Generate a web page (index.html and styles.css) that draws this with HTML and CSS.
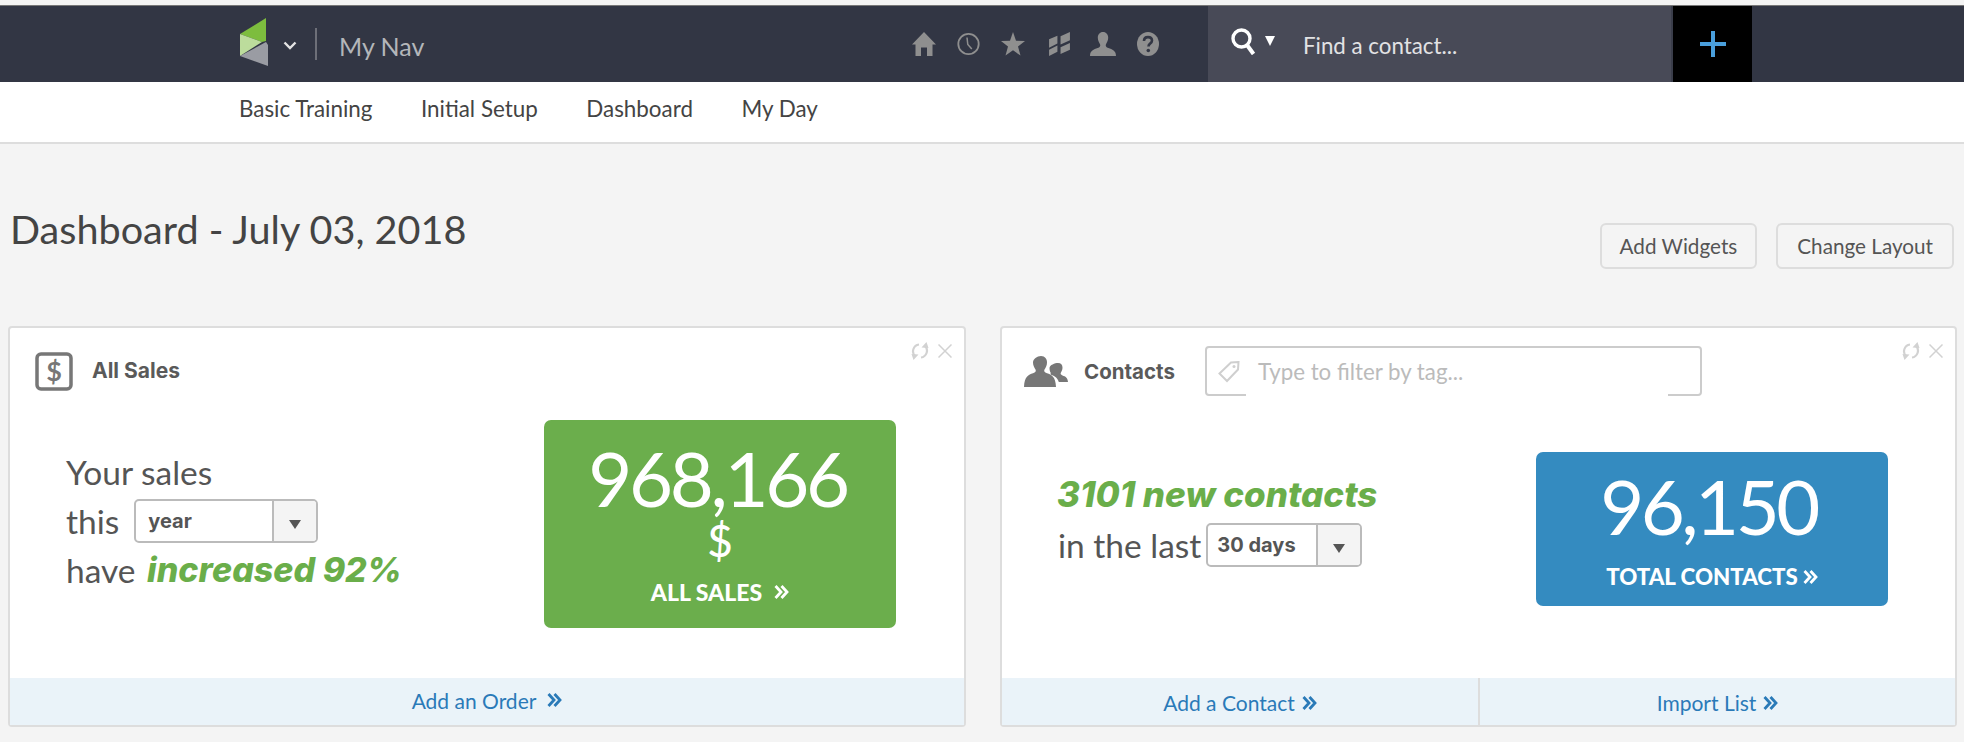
FILE: index.html
```html
<!DOCTYPE html>
<html lang="en">
<head>
<meta charset="utf-8">
<title>Dashboard</title>
<link rel="stylesheet" href="styles.css">
</head>
<body>
<header class="topbar">
  <div class="brand">
    <svg class="logo" width="28" height="48" viewBox="0 0 28 48"><polygon points="0,16 26,0 26,23 22,24" fill="#7dbd3e"/><polygon points="0,16 22,24 0,38" fill="#bcdc9c"/><polygon points="0,38 26,24 28,27 28,48" fill="#9a9ca3"/></svg>
    <svg class="chev" width="14" height="9" viewBox="0 0 14 9"><path d="M1.500 1.500L7 7l5.500-5.500" fill="none" stroke="#e4e4e4" stroke-width="2.400"/></svg>
    <span class="divider"></span>
    <span class="mynav">My Nav</span>
  </div>
  <div class="quick">
    <svg width="24" height="24" viewBox="0 0 24 24"><path d="M12 0L24 12.500h-3.500V24h-5.500V15.500H9V24H3.500V12.500H0z" fill="#8f8f8f"/></svg>
    <svg width="23" height="24" viewBox="0 0 23 24"><circle cx="11.500" cy="12" r="10.200" fill="none" stroke="#8f8f8f" stroke-width="1.800"/><path d="M10 5.500l.8 7 4 4.500" fill="none" stroke="#8f8f8f" stroke-width="1.500"/></svg>
    <svg width="24" height="24" viewBox="0 0 24 24"><polygon points="12,0 15,8.700 24,9 17,14.500 19.500,23.500 12,18.300 4.500,23.500 7,14.500 0,9 9,8.700" fill="#8f8f8f"/></svg>
    <svg class="q-flags" width="21" height="24" viewBox="0 0 20 23"><path d="M0 7L8 3.500V11L0 15zM0 17L8 13V19L0 23zM11 4L20 0V8L11 12zM11 14.500L20 10.500V17L11 21z" fill="#8f8f8f"/></svg>
    <svg class="q-person" width="26" height="24" viewBox="0 0 26 24"><path d="M13 0c3.200 0 5.200 2.500 5.200 5.800 0 3-1.500 5-2.300 6.700-.6 1.400.2 2.800 2.500 3.600 3.800 1.300 7.600 2.600 7.600 7.900H0c0-5.300 3.800-6.600 7.600-7.900 2.300-.8 3.100-2.200 2.500-3.600-.8-1.700-2.300-3.700-2.300-6.700C7.800 2.500 9.800 0 13 0z" fill="#8f8f8f"/></svg>
    <svg width="22" height="24" viewBox="0 0 22 24"><ellipse cx="11" cy="12" rx="11" ry="12" fill="#8f8f8f"/><path d="M7 9c0-2.600 1.800-3.900 4-3.900s4 1.300 4 3.500c0 3-3.500 3-3.500 5.800" fill="none" stroke="#323644" stroke-width="2.600"/><circle cx="11.300" cy="18.500" r="1.800" fill="#323644"/></svg>
  </div>
  <div class="search">
    <svg class="search-icon" width="28" height="27" viewBox="0 0 28 27"><circle cx="10.500" cy="10.500" r="8.500" fill="none" stroke="#fff" stroke-width="3.400"/><path d="M16 17l6.500 9" stroke="#fff" stroke-width="4" fill="none"/></svg>
    <span class="search-caret"></span>
    <span class="search-text">Find a contact...</span>
  </div>
  <div class="add">
    <svg width="26" height="26" viewBox="0 0 26 26"><path d="M13 0v26M0 13h26" stroke="#4a9fdc" stroke-width="4" fill="none"/></svg>
  </div>
</header>
<nav class="subnav">
  <a>Basic Training</a>
  <a>Initial Setup</a>
  <a>Dashboard</a>
  <a>My Day</a>
</nav>
<main class="page">
  <div class="titlebar">
    <h1>Dashboard - July 03, 2018</h1>
    <div class="actions">
      <button class="btn">Add Widgets</button>
      <button class="btn">Change Layout</button>
    </div>
  </div>
  <div class="cards">
    <section class="card card-sales">
      <div class="tools">
        <svg width="18" height="18" viewBox="0 0 18 18"><path d="M8 2.500A6.800 6.800 0 0 0 4 14M10 15.500A6.800 6.800 0 0 0 14 4" fill="none" stroke="#d2d2d2" stroke-width="2.200"/><path d="M.5 12l7 .5-5 5.500zM17.500 6l-7-.5 5-5.500z" fill="#d2d2d2"/></svg>
        <svg width="14" height="14" viewBox="0 0 14 14"><path d="M.5.500l13 13M13.500.500l-13 13" stroke="#d2d2d2" stroke-width="1.500"/></svg>
      </div>
      <div class="card-head head-sales">
        <svg width="38" height="39" viewBox="0 0 38 39"><rect x="2" y="2" width="34" height="35" rx="4" fill="none" stroke="#777" stroke-width="3.500"/><text x="19" y="29" text-anchor="middle" class="dollar-glyph">$</text></svg>
        <span class="card-title">All Sales</span>
      </div>
      <div class="card-body">
        <div class="lines lines-sales">
          <div class="line">Your sales</div>
          <div class="line">this<span class="select select-year"><span class="select-val">year</span><span class="select-arrow"></span></span></div>
          <div class="line">have <em class="hl hl-inc">increased 92%</em></div>
        </div>
        <a class="stat stat-green">
          <span class="stat-num">968,166</span>
          <span class="stat-unit">$</span>
          <span class="stat-label label-sales">ALL SALES
            <svg class="chevs" width="15" height="14" viewBox="0 0 15 14"><path d="M1.500 1l5.500 6-5.500 6M7.500 1l5.500 6-5.500 6" fill="none" stroke="#fff" stroke-width="2.800"/></svg>
          </span>
        </a>
      </div>
      <div class="card-foot foot-sales">
        <a class="foot-link link-order">Add an Order
          <svg class="chevs" width="15" height="14" viewBox="0 0 15 14"><path d="M1.500 1l5.500 6-5.500 6M7.500 1l5.500 6-5.500 6" fill="none" stroke="#2a7ab8" stroke-width="2.800"/></svg>
        </a>
      </div>
    </section>
    <section class="card card-contacts">
      <div class="tools">
        <svg width="18" height="18" viewBox="0 0 18 18"><path d="M8 2.500A6.800 6.800 0 0 0 4 14M10 15.500A6.800 6.800 0 0 0 14 4" fill="none" stroke="#d2d2d2" stroke-width="2.200"/><path d="M.5 12l7 .5-5 5.500zM17.500 6l-7-.5 5-5.500z" fill="#d2d2d2"/></svg>
        <svg width="14" height="14" viewBox="0 0 14 14"><path d="M.5.500l13 13M13.500.500l-13 13" stroke="#d2d2d2" stroke-width="1.500"/></svg>
      </div>
      <div class="card-head head-contacts">
        <svg width="44" height="31" viewBox="0 0 44 31"><path d="M17 0c4 0 6 3 6 6.500 0 3-1.500 5.500-2.500 7-.8 1.500 0 3 2.500 3.800 4.500 1.500 8.500 3 9 13.700H0c.5-10.700 4.500-12.200 9-13.700 2.500-.8 3.300-2.300 2.500-3.800-1-1.500-2.500-4-2.500-7C9 3 13 0 17 0z" fill="#777"/><path d="M34 7c3 0 4.500 2 4.500 4.800 0 2-1 3.800-1.700 5-.5 1 0 2 1.700 2.600 2.900 1 5.200 2 5.500 6.600H34.800c-1-3.500-3-5.400-7.300-7-1.300-.5-1-1.300-.7-2-.8-1.400-1.300-3-1.300-5C25.500 9 31 7 34 7z" fill="#777"/></svg>
        <span class="card-title">Contacts</span>
        <div class="tagfilter">
          <svg width="22" height="22" viewBox="0 0 22 22"><path d="M13 1.500l7.500-.5-.5 7.500L9 20 1.500 12.500z" fill="none" stroke="#cfcfcf" stroke-width="2"/><circle cx="16" cy="5.500" r="1.500" fill="#cfcfcf"/></svg>
          <span class="placeholder">Type to filter by tag...</span>
        </div>
      </div>
      <div class="card-body">
        <div class="lines lines-contacts">
          <div class="line"><em class="hl hl-new">3101 new contacts</em></div>
          <div class="line">in the last<span class="select select-days"><span class="select-val">30 days</span><span class="select-arrow"></span></span></div>
        </div>
        <a class="stat stat-blue">
          <span class="stat-num num-contacts">96,150</span>
          <span class="stat-label label-contacts">TOTAL CONTACTS
            <svg class="chevs" width="15" height="14" viewBox="0 0 15 14"><path d="M1.500 1l5.500 6-5.500 6M7.500 1l5.500 6-5.500 6" fill="none" stroke="#fff" stroke-width="2.800"/></svg>
          </span>
        </a>
      </div>
      <div class="card-foot foot-contacts">
        <a class="foot-link">Add a Contact
          <svg class="chevs" width="15" height="14" viewBox="0 0 15 14"><path d="M1.500 1l5.500 6-5.500 6M7.500 1l5.500 6-5.500 6" fill="none" stroke="#2a7ab8" stroke-width="2.800"/></svg>
        </a>
        <a class="foot-link">Import List
          <svg class="chevs" width="15" height="14" viewBox="0 0 15 14"><path d="M1.500 1l5.500 6-5.500 6M7.500 1l5.500 6-5.500 6" fill="none" stroke="#2a7ab8" stroke-width="2.800"/></svg>
        </a>
      </div>
    </section>
  </div>
</main>
</body>
</html>
```
FILE: styles.css
```css
* { box-sizing: border-box; }
html, body { margin: 0; padding: 0; }
body {
  background: #f4f4f4;
  font-family: "Lato", "Liberation Sans", sans-serif;
  color: #555;
  height: 742px;
  overflow: hidden;
  padding-top: 5px;
}
.topbar {
  height: 77px;
  background: #323644;
  border-top: 1px solid #777;
  display: flex;
  align-items: stretch;
}
.brand {
  display: flex;
  align-items: center;
  padding-left: 240px;
  width: 880px;
}
.logo { margin-top: -4px; }
.chev { margin-left: 15px; margin-top: 2px; }
.divider { width: 2px; height: 32px; background: #6d6f78; margin-left: 18px; }
.mynav { margin-left: 22px; font-size: 25px; color: #b4b6ba; margin-top: 4px; }
.quick {
  display: flex;
  align-items: center;
  width: 328px;
  padding-left: 32px;
  gap: 21px;
}
.q-flags { margin-left: 3px; }
.q-person { margin-left: -1px; }
.search {
  width: 465px;
  background: #484a57;
  display: flex;
  align-items: center;
  padding-left: 23px;
  border-right: 2px solid #3a3d4a;
}
.search-icon { margin-top: -5px; }
.search-caret {
  width: 0;
  height: 0;
  border-left: 5.500px solid transparent;
  border-right: 5.500px solid transparent;
  border-top: 10px solid #fff;
  margin-left: 6px;
  margin-top: -7px;
}
.search-text { margin-left: 28px; font-size: 22.300px; color: #e2e2e4; margin-top: 3px; }
.add {
  width: 79px;
  background: #000;
  display: flex;
  align-items: center;
  justify-content: center;
}
.subnav {
  height: 62px;
  background: #fff;
  border-bottom: 2px solid #ddd;
  display: flex;
  align-items: center;
  padding: 0 0 8px 239px;
  gap: 48.500px;
  font-size: 22.400px;
  color: #444;
}
.page { padding: 0 7px 0 8px; }
.titlebar {
  display: flex;
  justify-content: space-between;
  padding: 0 3px 0 2px;
  height: 182px;
}
h1 {
  margin: 62px 0 0;
  font-size: 39.600px;
  font-weight: 400;
  color: #444;
  line-height: 46px;
}
.actions { display: flex; gap: 19px; padding-top: 79px; align-items: flex-start; }
.btn {
  height: 46px;
  padding: 0 18px;
  border: 2px solid #ddd;
  border-radius: 6px;
  background: #f4f4f4;
  font: 400 20.700px "Lato", "Liberation Sans", sans-serif;
  color: #555;
}
.btn:last-child { padding: 0 19px; }
.cards { display: flex; gap: 34px; }
.card {
  position: relative;
  height: 401px;
  background: #fff;
  border: 2px solid #ddd;
  border-radius: 4px;
  display: flex;
  flex-direction: column;
}
.card-sales { width: 958px; }
.card-contacts { width: 957px; }
.tools {
  position: absolute;
  top: 14px;
  right: 12px;
  display: flex;
  align-items: center;
  gap: 9px;
}
.card-head { display: flex; align-items: flex-start; flex: none; }
.head-sales { height: 92px; padding: 24px 0 0 25px; }
.head-contacts { height: 124px; padding: 28px 0 0 22px; }
.card-title { font: 700 21px/24px "Inter", "Liberation Sans", sans-serif; color: #5a5a5a; }
.head-sales .card-title { margin: 7px 0 0 19px; }
.head-contacts .card-title { margin: 4px 0 0 16px; font-size: 20.500px; }
.dollar-glyph { font: 700 27px "Lato", "Liberation Sans", sans-serif; fill: #777; }
.tagfilter {
  position: relative;
  margin: -10px 0 0 30px;
  width: 497px;
  height: 50px;
  border: 2px solid #ccc;
  border-radius: 4px;
  display: flex;
  align-items: center;
  padding: 1px 0 0 11px;
}
.tagfilter::after {
  content: "";
  position: absolute;
  left: 39px;
  right: 32px;
  bottom: -2px;
  height: 2px;
  background: #fff;
}
.placeholder { margin-left: 18px; font-size: 22.300px; color: #bbb; }
.card-body {
  flex: 1;
  display: flex;
  justify-content: space-between;
  align-items: flex-start;
}
.card-sales .card-body { padding: 0 68px 0 56px; }
.card-contacts .card-body { padding: 0 67px 0 56px; }
.lines { font-size: 33.500px; color: #555; }
.lines-sales { margin-top: 27px; }
.lines-contacts { margin-top: 16px; }
.line { display: flex; align-items: center; white-space: pre; }
.lines-sales .line { height: 49px; }
.lines-contacts .line { height: 51px; }
.hl { font: italic 800 34px "Inter", "Liberation Sans", sans-serif; color: #6aae4a; }
.hl-inc { margin-left: 3px; }
.hl-new { font-size: 35px; margin-left: -1px; }
.select {
  display: inline-flex;
  align-items: stretch;
  height: 44px;
  background: #fff;
  border: 2px solid #bbb;
  border-radius: 5px;
  font: 700 20px "Inter", "Liberation Sans", sans-serif;
  color: #555;
  overflow: hidden;
}
.select-year { width: 184px; margin-left: 15px; }
.select-days { width: 156px; margin-left: 5px; }
.select-val { flex: 1; display: flex; align-items: center; padding-left: 12px; }
.select-days .select-val { padding-left: 9px; }
.select-arrow {
  width: 44px;
  background: #f4f4f4;
  border-left: 2px solid #bbb;
  position: relative;
}
.select-arrow::after {
  content: "";
  position: absolute;
  left: 15px;
  top: 19px;
  border-left: 6px solid transparent;
  border-right: 6px solid transparent;
  border-top: 9px solid #555;
}
.stat {
  width: 352px;
  border-radius: 7px;
  color: #fff;
  display: flex;
  flex-direction: column;
  align-items: center;
}
.stat-green { height: 208px; background: #6bae4c; }
.stat-blue { height: 154px; background: #348bc0; }
.stat-num { font-size: 76px; line-height: 70px; margin: 23px 5px 0 0; font-weight: 400; letter-spacing: -3.300px; }
.stat-num.num-contacts { line-height: 80px; margin: 14px 7px 0 0; letter-spacing: -3.500px; }
.stat-unit { font-size: 44px; line-height: 46px; font-weight: 500; margin-top: 4px; }
.stat-label { display: flex; align-items: center; font-weight: 900; font-size: 23px; line-height: 26px; }
.label-sales { margin-top: 16px; gap: 12px; }
.label-contacts { margin-top: 18px; gap: 5px; font-size: 22.300px; }
.card-foot {
  flex: none;
  height: 47px;
  background: #eaf3f9;
  display: flex;
}
.foot-link {
  display: flex;
  flex: 1;
  align-items: center;
  justify-content: center;
  gap: 7px;
  font-size: 21px;
  color: #2a7ab8;
  padding-top: 2px;
}
.foot-contacts .foot-link:first-child { flex: none; width: 478px; border-right: 2px solid #ddd; }
.link-order { padding-top: 0; padding-bottom: 3px; gap: 11px; }
```
